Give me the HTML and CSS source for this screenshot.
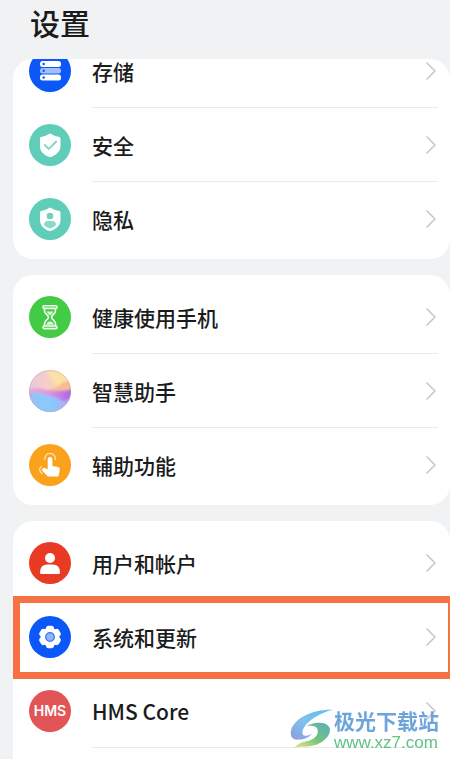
FILE: index.html
```html
<!DOCTYPE html>
<html lang="zh-CN">
<head>
<meta charset="utf-8">
<meta name="viewport" content="width=device-width, initial-scale=1">
<title>设置</title>
<link rel="stylesheet" href="styles.css">
</head>
<body>
<svg class="defs" aria-hidden="true">
  <symbol id="chevron" viewBox="0 0 12 20"><path d="M2 2l8 8-8 8" fill="none" stroke="#c9c9c9" stroke-width="1.7" stroke-linecap="round" stroke-linejoin="round"/></symbol>
</svg>
<header class="header"><h1 class="title">设置</h1></header>
<main class="groups">
  <ul class="card card-scrolled">
    <li class="row"><a class="link" href="#storage">
      <svg class="icon" viewBox="0 0 42 42" aria-hidden="true"><circle cx="21" cy="21" r="21" fill="#0b57f7"/><rect x="11" y="11" width="21" height="6" rx="2.5" fill="#fff"/><rect x="11" y="18" width="21" height="5.5" rx="2.5" fill="#a2c0fb"/><rect x="11" y="24.5" width="21" height="6" rx="2.5" fill="#fff"/><g fill="#0b57f7"><circle cx="14.7" cy="14" r="1.2"/><circle cx="14.7" cy="20.8" r="1.2"/><circle cx="14.7" cy="27.5" r="1.2"/></g></svg>
      <span class="label">存储</span><svg class="chevron"><use href="#chevron"/></svg></a></li>
    <li class="row"><a class="link" href="#security">
      <svg class="icon" viewBox="0 0 42 42" aria-hidden="true"><circle cx="21" cy="21" r="21" fill="#5fcdb8"/><path d="M21 9.5q5 3 9.500 3.500q1 .2 1 1.500v7.500c0 5.500-4 8.500-8.500 10.500q-2 1-4 0c-4.500-2-8-5-8-10.500v-7.500q0-1.300 1-1.500q4-.5 9-3.500z" fill="#fff"/><path d="M15.800 21l4 4 7.400-7.500" fill="none" stroke="#83d8c8" stroke-width="1.900" stroke-linecap="round"/></svg>
      <span class="label">安全</span><svg class="chevron"><use href="#chevron"/></svg></a></li>
    <li class="row"><a class="link" href="#privacy">
      <svg class="icon" viewBox="0 0 42 42" aria-hidden="true"><circle cx="21" cy="21" r="21" fill="#5fcdb8"/><path d="M21 9.5q5 3 9.500 3.500q1 .2 1 1.500v7.500c0 5.500-4 8.500-8.500 10.500q-2 1-4 0c-4.500-2-8-5-8-10.500v-7.500q0-1.300 1-1.500q4-.5 9-3.500z" fill="#fff"/><circle cx="21" cy="18" r="3.300" fill="#70d1be"/><path d="M15 27q0-4 4-4h4q4 0 4 4-2.500 3-6 3.500-3.500-.5-6-3.500z" fill="#86dac9"/></svg>
      <span class="label">隐私</span><svg class="chevron"><use href="#chevron"/></svg></a></li>
  </ul>
  <ul class="card">
    <li class="row"><a class="link" href="#balance">
      <svg class="icon" viewBox="0 0 42 42" aria-hidden="true"><circle cx="21" cy="21" r="21" fill="#43cb45"/><g fill="none" stroke="#f2fff0" stroke-width="1.600" stroke-linejoin="round"><rect x="14" y="9.800" width="14" height="2.600" rx="1.200"/><rect x="14" y="30" width="14" height="2.600" rx="1.200"/><path d="M15.500 12.500v2.500c0 3 4 4 4 6.200s-4 3.500-4 6.300V30M26.500 12.500v2.500c0 3-4 4-4 6.200s4 3.500 4 6.300V30"/></g><path d="M17.500 15.500h7q-.8 2.200-3.500 4-2.700-1.800-3.500-4zM17.300 28.800q.4-2.800 3.700-3.500 3.300.7 3.700 3.500z" fill="#d9f8d5"/></svg>
      <span class="label">健康使用手机</span><svg class="chevron"><use href="#chevron"/></svg></a></li>
    <li class="row"><a class="link" href="#assistant">
      <svg class="icon" viewBox="0 0 42 42" aria-hidden="true">
        <defs>
          <clipPath id="orb"><circle cx="21" cy="21" r="21"/></clipPath>
          <linearGradient id="sky" x1="0" y1="0.300" x2="1" y2="0.200"><stop offset="0" stop-color="#e9c9dc"/><stop offset=".5" stop-color="#f8cfc4"/><stop offset="1" stop-color="#fbdc8d"/></linearGradient>
          <linearGradient id="band" x1="0" y1="0" x2="1" y2="0"><stop offset="0" stop-color="#efa8c5"/><stop offset=".45" stop-color="#dc9be2"/><stop offset="1" stop-color="#ab60e5"/></linearGradient>
          <linearGradient id="sea" x1="0" y1="0" x2="1" y2="0"><stop offset="0" stop-color="#96bff5"/><stop offset=".5" stop-color="#89ccfb"/><stop offset="1" stop-color="#a5a5f5"/></linearGradient>
          <filter id="soft"><feGaussianBlur stdDeviation="0.900"/></filter>
        </defs>
        <g clip-path="url(#orb)"><path fill="url(#sky)" d="M0 0h42v42H0z"/><g filter="url(#soft)"><path d="M18-2q1 9 7 15t19 5V-2z" fill="#fce3a4" opacity=".8"/><path d="M20 19q8 0 13-6 5-3 11-1v10H20z" fill="#f5bd91"/><path d="M-2 20q8-3 15-1t15 2 16-2v28H-2z" fill="url(#band)"/><path d="M-2 24q8-3 14-1 6 3 11 4 7 1 11 4 5 1 10 0v17H-2z" fill="url(#sea)"/><path d="M44 28q-15 2-20 18h20z" fill="#b7b1f7" opacity=".6"/></g></g>
        <circle cx="21" cy="21" r="20.500" fill="none" stroke="#ba9fbc" stroke-opacity=".4"/>
      </svg>
      <span class="label">智慧助手</span><svg class="chevron"><use href="#chevron"/></svg></a></li>
    <li class="row"><a class="link" href="#accessibility">
      <svg class="icon" viewBox="0 0 42 42" aria-hidden="true"><circle cx="21" cy="21" r="21" fill="#fba21d"/><path d="M18.700 15q0-2 2.300-2t2.400 2v7l5.600 1q2 .3 1.800 2.300l-1 6q-.2 1.200-1.500 1.200H20q-1.200 0-2-.8l-4.500-5q-1.200-1.200-.2-2 1.700-1.500 5.400.7z" fill="#fff"/><g fill="none" stroke="#ffe0aa" stroke-width="1.300" stroke-linecap="round"><path d="M15.800 15.500a5.300 5.300 0 1 1 10.500 0"/><path d="M12.500 22.500q-4 3 .5 7"/></g></svg>
      <span class="label">辅助功能</span><svg class="chevron"><use href="#chevron"/></svg></a></li>
  </ul>
  <ul class="card card-last">
    <li class="row"><a class="link" href="#accounts">
      <svg class="icon" viewBox="0 0 42 42" aria-hidden="true"><circle cx="21" cy="21" r="21" fill="#e93a24"/><circle cx="21" cy="16" r="5" fill="#fff"/><path d="M11 30.500q0-8 7.500-8h5q7.500 0 7.500 8 0 1.500-1.500 1.500h-17q-1.500 0-1.500-1.500z" fill="#fff"/></svg>
      <span class="label">用户和帐户</span><svg class="chevron"><use href="#chevron"/></svg></a></li>
    <li class="row row-highlight"><a class="link" href="#system">
      <svg class="icon" viewBox="0 0 42 42" aria-hidden="true"><circle cx="21" cy="21" r="21" fill="#0b57f7"/><g fill="#fff"><circle cx="21" cy="21" r="9.500"/><rect id="tooth" x="17" y="9.800" width="8" height="22.400" rx="2.600"/><use href="#tooth" transform="rotate(60 21 21)"/><use href="#tooth" transform="rotate(120 21 21)"/></g><circle cx="21" cy="21" r="4.300" fill="#8db4f8" stroke="#3475ed" stroke-width="1.300"/></svg>
      <span class="label">系统和更新</span><svg class="chevron"><use href="#chevron"/></svg></a></li>
    <li class="row"><a class="link" href="#hms">
      <span class="icon hms" aria-hidden="true">HMS</span>
      <span class="label">HMS Core</span><svg class="chevron"><use href="#chevron"/></svg></a></li>
  </ul>
</main>
<aside class="watermark">
  <svg class="mark" viewBox="0 0 46 42" aria-hidden="true">
    <defs>
      <linearGradient id="blue" x1="1" y1="0" x2="0" y2="1"><stop offset="0" stop-color="#47baf2"/><stop offset=".55" stop-color="#73b9ed"/><stop offset="1" stop-color="#8292d4"/></linearGradient>
      <linearGradient id="green" x1="1" y1="0" x2="0" y2="1"><stop offset="0" stop-color="#4ba2bc"/><stop offset=".5" stop-color="#65bd72"/><stop offset="1" stop-color="#e9e878"/></linearGradient>
    </defs>
    <path d="M45 1C26 0 4 9 1 23c-1 6 2 10 8 9 6 0 11-2 14-6-6 3-10 3-10-1C13 17 27 5 45 1z" fill="url(#blue)"/>
    <path d="M17 18c8-5 21-5 24 1 4 8-8 19-20 20-6 1-12 0-17 2 3-4 7-6 12-7 8-1 14-6 13-12-1-4-6-5-12-4z" fill="url(#green)"/>
  </svg>
  <span class="brand"><span class="brand-name">极光下载站</span><span class="brand-site">www.xz7.com</span></span>
</aside>
</body>
</html>
```

FILE: styles.css
```css
* { box-sizing: border-box; }

body {
  margin: 0;
  min-height: 100vh;
  display: flex;
  flex-direction: column;
  position: relative;
  overflow-x: hidden;
  background: #f1f2f4;
  color: #1b1b1b;
  font-family: "Noto Sans CJK SC", "Noto Sans", sans-serif;
}

.defs {
  position: absolute;
  width: 0;
  height: 0;
}

.header { padding: 0 30px 15px; }

.title {
  margin: 0;
  font-size: 30px;
  line-height: 44px;
  font-weight: 500;
}

.groups {
  flex: 1;
  display: flex;
  flex-direction: column;
  gap: 16px;
  padding-left: 13px;
}

.card {
  margin: 0;
  padding: 5px 0 4px;
  list-style: none;
  background: #fff;
  border-radius: 20px;
  overflow: hidden;
}

.card-scrolled { padding-top: 0; }
.card-scrolled .row:first-child { margin-top: -25px; }

.card-last {
  flex: 1;
  border-radius: 20px 20px 0 0;
}

.row { position: relative; }

.row:not(:last-child)::after,
.card-last .row::after {
  content: "";
  display: block;
  height: 1px;
  margin: 0 12px 0 79px;
  background: #ebebeb;
}

.row-highlight::before {
  content: "";
  position: absolute;
  z-index: 1;
  inset: -4px -5px -5px 0;
  border: 7px solid #f77243;
  pointer-events: none;
}

.link {
  display: flex;
  align-items: center;
  height: 73px;
  padding: 0 13px 0 16px;
  color: inherit;
  text-decoration: none;
}

.icon {
  flex: none;
  width: 42px;
  height: 42px;
}

.hms {
  display: flex;
  align-items: center;
  justify-content: center;
  border-radius: 50%;
  background: #e25557;
  color: #fff;
  font: 600 14px/16px Inter, sans-serif;
}

.label {
  flex: 1;
  padding-left: 21px;
  font-size: 21px;
  line-height: 22px;
  font-weight: 500;
}

.chevron {
  flex: none;
  width: 12px;
  height: 20px;
}

.watermark {
  position: absolute;
  z-index: 2;
  right: 11px;
  top: 706px;
  display: flex;
  align-items: center;
  opacity: 0.9;
  pointer-events: none;
}

.mark {
  width: 44px;
  height: 42px;
}

.brand {
  display: flex;
  flex-direction: column;
}

.brand-name {
  color: #5f9bd9;
  font-size: 21px;
  line-height: 28px;
  font-weight: 700;
}

.brand-site {
  color: #4fbb75;
  font: 400 17px/18px "Liberation Sans", sans-serif;
}
```
